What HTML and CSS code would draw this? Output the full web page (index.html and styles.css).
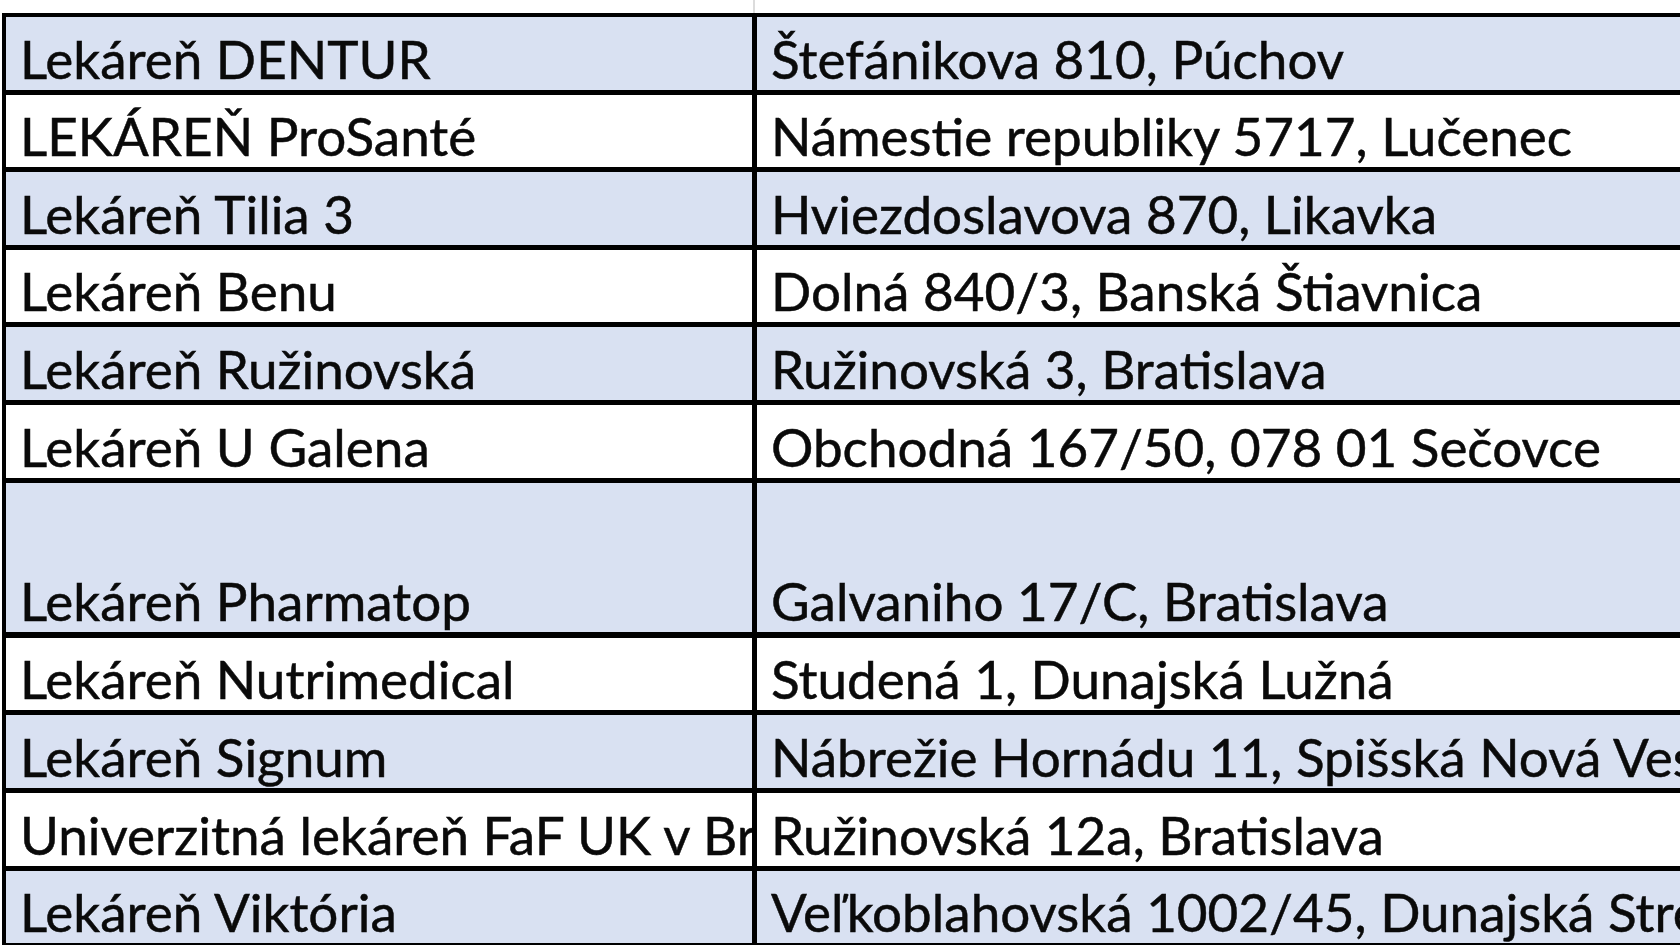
FILE: index.html
```html
<!DOCTYPE html>
<html lang="sk">
<head>
<meta charset="utf-8">
<title>Lekárne</title>
<link rel="stylesheet" href="styles.css">
</head>
<body>
<div class="sheet">
  <div class="gridtop">
    <div class="gt-col1"></div>
    <div class="gt-col2"></div>
  </div>
  <div class="table">
    <div class="cell blue">Lekáreň DENTUR</div>
    <div class="cell blue">Štefánikova 810, Púchov</div>
    <div class="cell">LEKÁREŇ ProSanté</div>
    <div class="cell">Námestie republiky 5717, Lučenec</div>
    <div class="cell blue">Lekáreň Tilia 3</div>
    <div class="cell blue">Hviezdoslavova 870, Likavka</div>
    <div class="cell">Lekáreň Benu</div>
    <div class="cell">Dolná 840/3, Banská Štiavnica</div>
    <div class="cell blue">Lekáreň Ružinovská</div>
    <div class="cell blue">Ružinovská 3, Bratislava</div>
    <div class="cell">Lekáreň U Galena</div>
    <div class="cell">Obchodná 167/50, 078 01 Sečovce</div>
    <div class="cell blue tall">Lekáreň Pharmatop</div>
    <div class="cell blue tall">Galvaniho 17/C, Bratislava</div>
    <div class="cell">Lekáreň Nutrimedical</div>
    <div class="cell">Studená 1, Dunajská Lužná</div>
    <div class="cell blue">Lekáreň Signum</div>
    <div class="cell blue">Nábrežie Hornádu 11, Spišská Nová Ves</div>
    <div class="cell">Univerzitná lekáreň FaF UK v Bratislave</div>
    <div class="cell">Ružinovská 12a, Bratislava</div>
    <div class="cell blue">Lekáreň Viktória</div>
    <div class="cell blue">Veľkoblahovská 1002/45, Dunajská Streda</div>
    <div class="cell"></div>
    <div class="cell"></div>
  </div>
</div>
</body>
</html>
```

FILE: styles.css
```css
html, body {
  margin: 0;
  padding: 0;
  background: #ffffff;
  overflow: hidden;
  width: 1680px;
  height: 945px;
}

.sheet {
  width: 1680px;
  height: 945px;
  overflow: hidden;
  font-family: "Lato", "Noto Sans", sans-serif;
  color: #0a0a0a;
}

.gridtop {
  display: flex;
  height: 13px;
  padding-left: 2px;
}

.gt-col1 {
  width: 751px;
  border-right: 2px solid #dcdcdc;
}

.gt-col2 {
  flex: 1;
}

.table {
  display: grid;
  grid-template-columns: 746px 1100px;
  grid-auto-rows: 72.6px;
  gap: 5px;
  background: #000000;
  margin-left: 2px;
  padding: 4px 0 0 4px;
  width: max-content;
}

.cell {
  background: #ffffff;
  display: flex;
  align-items: flex-end;
  padding: 0 10px 5px 14px;
  font-size: 53px;
  line-height: 1;
  white-space: nowrap;
  overflow: hidden;
  -webkit-text-stroke: 0.5px #0a0a0a;
}

.cell.blue {
  background: #d9e1f2;
}

.cell.tall {
  height: 144px;
  grid-row: span 2;
}
```
